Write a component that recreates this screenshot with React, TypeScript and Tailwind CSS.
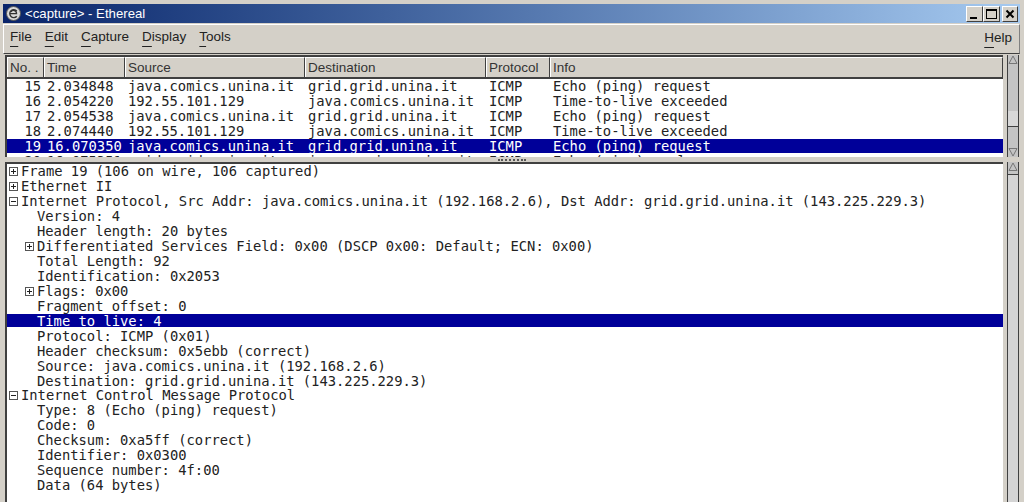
import React from "react";

const cols = ["w-[37px]", "w-[81px]", "w-[180px]", "w-[181px]", "w-[64px]", "flex-1"];
const headers = ["No. .", "Time", "Source", "Destination", "Protocol", "Info"];
const rows = [
  ["15", "2.034848", "java.comics.unina.it", "grid.grid.unina.it", "ICMP", "Echo (ping) request"],
  ["16", "2.054220", "192.55.101.129", "java.comics.unina.it", "ICMP", "Time-to-live exceeded"],
  ["17", "2.054538", "java.comics.unina.it", "grid.grid.unina.it", "ICMP", "Echo (ping) request"],
  ["18", "2.074440", "192.55.101.129", "java.comics.unina.it", "ICMP", "Time-to-live exceeded"],
  ["19", "16.070350", "java.comics.unina.it", "grid.grid.unina.it", "ICMP", "Echo (ping) request"],
  ["20", "16.075351", "grid.grid.unina.it", "java.comics.unina.it", "ICMP", "Echo (ping) reply"],
];
type D = { t: string; lvl: 0 | 1; ex?: "+" | "-"; sel?: boolean; short?: boolean };
const details: D[] = [
  { t: "Frame 19 (106 on wire, 106 captured)", lvl: 0, ex: "+" },
  { t: "Ethernet II", lvl: 0, ex: "+" },
  { t: "Internet Protocol, Src Addr: java.comics.unina.it (192.168.2.6), Dst Addr: grid.grid.unina.it (143.225.229.3)", lvl: 0, ex: "-" },
  { t: "Version: 4", lvl: 1 },
  { t: "Header length: 20 bytes", lvl: 1 },
  { t: "Differentiated Services Field: 0x00 (DSCP 0x00: Default; ECN: 0x00)", lvl: 1, ex: "+" },
  { t: "Total Length: 92", lvl: 1 },
  { t: "Identification: 0x2053", lvl: 1 },
  { t: "Flags: 0x00", lvl: 1, ex: "+" },
  { t: "Fragment offset: 0", lvl: 1 },
  { t: "Time to live: 4", lvl: 1, sel: true },
  { t: "Protocol: ICMP (0x01)", lvl: 1 },
  { t: "Header checksum: 0x5ebb (correct)", lvl: 1 },
  { t: "Source: java.comics.unina.it (192.168.2.6)", lvl: 1 },
  { t: "Destination: grid.grid.unina.it (143.225.229.3)", lvl: 1, short: true },
  { t: "Internet Control Message Protocol", lvl: 0, ex: "-" },
  { t: "Type: 8 (Echo (ping) request)", lvl: 1 },
  { t: "Code: 0", lvl: 1 },
  { t: "Checksum: 0xa5ff (correct)", lvl: 1 },
  { t: "Identifier: 0x0300", lvl: 1 },
  { t: "Sequence number: 4f:00", lvl: 1 },
  { t: "Data (64 bytes)", lvl: 1 },
];

function Expander({ kind }: { kind: "+" | "-" }) {
  return (
    <svg width="9" height="9" viewBox="0 0 9 9" className="shrink-0 block">
      <rect x="0.5" y="0.5" width="8" height="8" fill="#fff" stroke="#555" />
      <path d="M2 4.5H7" stroke="#222" />
      {kind === "+" && <path d="M4.5 2V7" stroke="#222" />}
    </svg>
  );
}

function Menu({ first, rest }: { first: string; rest: string }) {
  return (
    <span className="text-[13.5px] leading-[18px] text-[#222]">
      <span className="underline underline-offset-[5px] decoration-1">{first}</span>
      {rest}
    </span>
  );
}

function Arrow({ down }: { down?: boolean }) {
  return (
    <svg width="10" height="10" viewBox="0 0 10 10" className="shrink-0">
      <path d={down ? "M1 1.5H9L5 9Z" : "M5 1L9 8.5H1Z"} fill="none" stroke="#777" />
    </svg>
  );
}

function WinBtn({ children, cls }: { children: React.ReactNode; cls: string }) {
  return (
    <div className={`h-[16px] flex items-center justify-center bg-[#d4d0c8] border border-t-white border-l-white border-r-[#404040] border-b-[#404040] ${cls}`}>
      {children}
    </div>
  );
}

export default function App() {
  return (
    <div className="w-[1024px] h-[502px] overflow-hidden bg-[#d4d0c8] flex flex-col pt-[4px] pl-[3px] pr-[4px] font-['Liberation_Sans',sans-serif]">
      <div className="h-[19px] shrink-0 flex items-center pl-[3px] pr-[2px] bg-gradient-to-r from-[#0a246a] to-[#a6caf0]">
        <svg width="15" height="15" viewBox="0 0 15 15" className="shrink-0">
          <circle cx="7.5" cy="7.5" r="7" fill="#d9d9d9" stroke="#555" />
          <path d="M10.8 5A4 4 0 1 0 10.8 10.2M4.5 7.6H10.5A3 3 0 0 0 5 5.8" fill="none" stroke="#333" strokeWidth="1.4" />
        </svg>
        <span className="ml-[4px] text-[13.2px] leading-[18px] text-white">&lt;capture&gt; - Ethereal</span>
        <div className="ml-auto flex items-center">
          <WinBtn cls="w-[17px]">
            <div className="w-[7px] h-[2px] bg-black mt-[8px] mr-[2px]" />
          </WinBtn>
          <WinBtn cls="w-[17px]">
            <div className="w-[11px] h-[10px] border border-black border-t-2" />
          </WinBtn>
          <WinBtn cls="w-[16px] ml-[2px]">
            <svg width="10" height="10" viewBox="0 0 10 10">
              <path d="M1.5 1.5L8.5 8.5M8.5 1.5L1.5 8.5" stroke="#000" strokeWidth="2" />
            </svg>
          </WinBtn>
        </div>
      </div>

      <div className="h-[30px] shrink-0 mt-[1px] pl-[6px] pr-[7px] pb-[4px] flex items-center gap-[13px] border border-t-white border-l-white border-r-[#808080] border-b-[#404040]">
        <Menu first="F" rest="ile" />
        <Menu first="E" rest="dit" />
        <Menu first="C" rest="apture" />
        <Menu first="D" rest="isplay" />
        <Menu first="T" rest="ools" />
        <div className="ml-auto">
          <Menu first="H" rest="elp" />
        </div>
      </div>

      <div className="h-[102px] shrink-0 mt-[1px] pl-[2px] flex gap-[4px]">
        <div className="w-[998px] border-l-2 border-t-2 border-[#404040] bg-white overflow-hidden flex flex-col">
          <div className="h-[22px] shrink-0 flex bg-[#d4d0c8] border-b-2 border-[#404040]">
            {headers.map((h, i) => (
              <div
                key={h}
                className={`${cols[i]} pl-[2px] flex items-center text-[13.5px] leading-[18px] text-[#333] border-l border-t border-l-white border-t-white border-r border-r-[#404040]`}
              >
                {h}
              </div>
            ))}
          </div>
          <div className="font-['DejaVu_Sans_Mono',monospace] text-[13.8px] leading-[15px] text-[#222]">
            {rows.map((r, ri) => (
              <div key={ri} className={`flex ${ri === 4 ? "h-[14px] mb-[1px] bg-[#000099] text-white" : "h-[15px]"}`}>
                {r.map((c, i) => (
                  <div
                    key={i}
                    className={`${cols[i]} whitespace-pre ${i === 0 ? "text-right pr-[3px]" : "pl-[3px]"}`}
                  >
                    {c}
                  </div>
                ))}
              </div>
            ))}
          </div>
        </div>
        <div className="w-[12px] flex flex-col items-center border-x border-[#404040] bg-[#c4c4c4]">
          <Arrow />
          <div className="w-full h-[16px] shrink-0 bg-[#d8d8d8] border-b border-[#404040] mt-[46px]" />
          <div className="flex-1" />
          <Arrow down />
        </div>
      </div>

      <div className="h-[5px] shrink-0 flex justify-center items-center">
        <div className="w-[28px] border-t-2 border-dotted border-[#555]" />
      </div>

      <div className="flex-1 min-h-0 pl-[2px] flex gap-[4px]">
        <div className="w-[998px] border-l-2 border-t-2 border-[#404040] bg-white overflow-hidden font-['DejaVu_Sans_Mono',monospace] text-[13.8px] leading-[15px] text-[#222]">
          {details.map((d, i) => (
            <div
              key={i}
              className={`relative whitespace-pre ${d.lvl === 0 ? "pl-[14px]" : "pl-[30px]"} ${d.sel ? "h-[13px] mb-[2px] bg-[#000099] text-white" : d.short ? "h-[14px]" : "h-[15px]"}`}
            >
              {d.ex && (
                <span className={`absolute top-[3px] ${d.lvl === 0 ? "left-[2px]" : "left-[18px]"}`}>
                  <Expander kind={d.ex} />
                </span>
              )}
              {d.t}
            </div>
          ))}
        </div>
        <div className="w-[12px] flex flex-col items-center border-x border-[#404040] bg-[#c4c4c4]">
          <Arrow />
          <div className="w-full flex-1 mt-[2px] bg-[#d4d4d4] border-t border-[#404040]" />
        </div>
      </div>
    </div>
  );
}
